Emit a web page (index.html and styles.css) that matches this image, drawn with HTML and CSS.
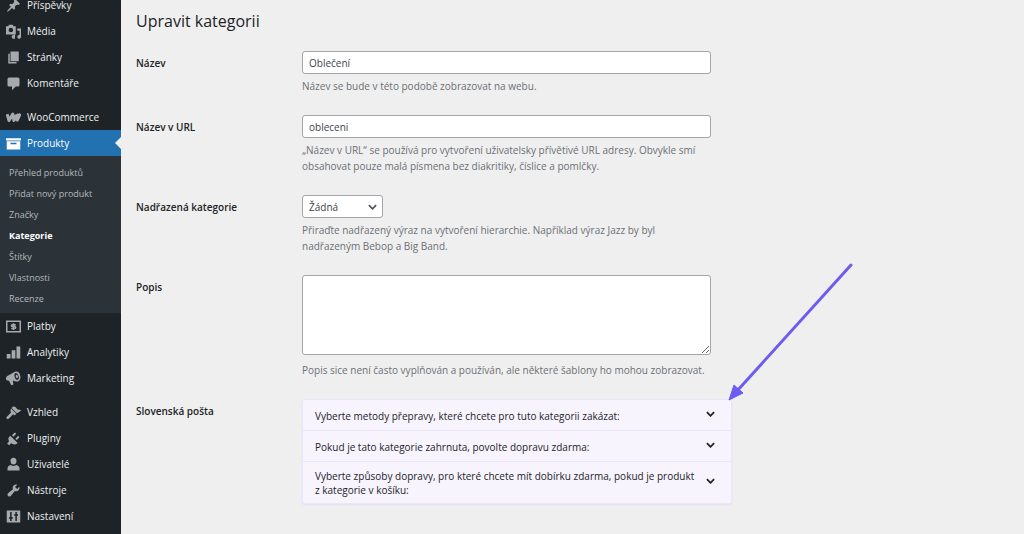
FILE: index.html
```html
<!DOCTYPE html>
<html lang="cs">
<head>
<meta charset="utf-8">
<meta name="viewport" content="width=device-width, initial-scale=1">
<title>Upravit kategorii</title>
<link rel="stylesheet" href="styles.css">
</head>
<body>
<div class="admin">
  <nav class="sidebar" aria-label="Hlavní menu">
    <ul class="menu">
      <li><a class="menu-link" href="#"><svg class="icon" viewBox="0 0 20 20"><path d="M10.440 3.020l1.820-1.820 6.360 6.350-1.830 1.820c-1.050-.68-2.480-.57-3.410.36l-.75.75c-.92.93-1.040 2.350-.35 3.410l-1.830 1.820-2.410-2.410-2.800 2.790c-.42.42-3.380 2.710-3.800 2.290s1.860-3.390 2.280-3.810l2.790-2.790L4.100 9.360l1.830-1.820c1.050.69 2.480.57 3.400-.36l.75-.75c.93-.92 1.050-2.350.36-3.410z"/></svg>Příspěvky</a></li>
      <li><a class="menu-link" href="#"><svg class="icon" viewBox="0 0 20 20"><path fill-rule="evenodd" d="M0 3h3l1-2h5l1 2h3v11H0zM6.500 5a3 3 0 1 0 0 6 3 3 0 0 0 0-6zM15 6h5v11a2.500 2.500 0 1 1-2-2.400V9h-3zM12 14v5.500h-2a2.500 2.500 0 1 1 0-5z"/></svg>Média</a></li>
      <li><a class="menu-link" href="#"><svg class="icon" viewBox="0 0 20 20"><path d="M6 15V2h11v13zM5 16h9v2H3V5h2z"/></svg>Stránky</a></li>
      <li><a class="menu-link" href="#"><svg class="icon" viewBox="0 0 20 20"><path d="M4 2h12q2 0 2 2v8q0 2-2 2h-3l-5 5v-5H4q-2 0-2-2V4q0-2 2-2z"/></svg>Komentáře</a></li>
    </ul>
    <ul class="menu">
      <li><a class="menu-link" href="#"><svg class="icon" viewBox="0 0 20 20"><path class="stroke" d="M1.500 5.500L4 14l5-8.500L10.500 14l6-8.500M12.500 6l2.500 7.500L19 5"/></svg>WooCommerce</a></li>
      <li>
        <a class="menu-link current" href="#"><svg class="icon" viewBox="0 0 20 20"><path fill-rule="evenodd" d="M0 3h20v3H0zM1 7h18v11H1zM6 9v2h8V9z"/></svg>Produkty</a>
        <ul class="submenu">
          <li><a href="#">Přehled produktů</a></li>
          <li><a href="#">Přidat nový produkt</a></li>
          <li><a href="#">Značky</a></li>
          <li><a class="selected" href="#" aria-current="page">Kategorie</a></li>
          <li><a href="#">Štítky</a></li>
          <li><a href="#">Vlastnosti</a></li>
          <li><a href="#">Recenze</a></li>
        </ul>
      </li>
      <li><a class="menu-link" href="#"><svg class="icon" viewBox="0 0 20 20"><path fill-rule="evenodd" d="M0 2h20v16H0zM2 4v12h16V4z"/><path class="line" d="M13 7.500H8.500q-1.300 0-1.300 1.200T8.500 10h3q1.400 0 1.400 1.300t-1.400 1.200H7M10 5.500v9"/></svg>Platby</a></li>
      <li><a class="menu-link" href="#"><svg class="icon" viewBox="0 0 20 20"><path d="M1 12h5v6H1zM7.500 7h5v11h-5zM14 2h5v16h-5z"/></svg>Analytiky</a></li>
      <li><a class="menu-link" href="#"><svg class="icon" viewBox="0 0 20 20"><path fill-rule="evenodd" d="M10 2c4-3 8-1 9 4s-1 8-4 8c-2 0-4-1-6-1l1 5-3 1-3-6c-3 0-4-1-4-3s1-3 3-4zM13 2.500c-3 0-2 9 2 9.500 4-.5 2-9-2-9.500zM14 5c2 0 3 4 1 4.500-2 0-3-4-1-4.500z"/></svg>Marketing</a></li>
    </ul>
    <ul class="menu">
      <li><a class="menu-link" href="#"><svg class="icon" viewBox="0 0 20 20"><path d="M14.480 11.060L7.410 3.990l1.500-1.500c.5-.56 2.300-.47 3.510.32 1.210.8 1.430 1.280 2 2.300.53.80 1.600 1.150 3 1.250l1.900.1.500 1.700c-1 .2-1.600.5-2.200 1.100zM6.700 4.700l7.070 7.070-1.500 1.500c-.5.4-1.500.3-2-.2-.6-.6-1.200-.4-1.700.1L4.300 17.700c-1 1-2.400 1.500-3.300.7-.8-.9-.3-2.300.7-3.300l4.500-4.300c.5-.5.7-1.100.1-1.700-.5-.5-.6-1.500-.2-2z"/></svg>Vzhled</a></li>
      <li><a class="menu-link" href="#"><svg class="icon" viewBox="0 0 20 20"><path d="M13.110 4.360L9.870 7.600 8 5.730l3.240-3.240c.35-.34 1.050-.2 1.560.32.520.51.660 1.210.31 1.550zM6 6.500l9.500 9.500-1 1c-2.500 1.500-5.500 1.200-7.600-.6L4 19l-2.500-2.500 2.700-2.700c-1.500-2.200-1.600-4.800.8-6.800zM14.300 12.100l-1.900-1.900L15.600 7c.4-.3 1.100-.2 1.600.3.500.6.700 1.200.3 1.600z"/></svg>Pluginy</a></li>
      <li><a class="menu-link" href="#"><svg class="icon" viewBox="0 0 20 20"><path d="M10 1a4 4 0 0 1 4 4.500C14 8 12.200 10 10 10S6 8 6 5.500A4 4 0 0 1 10 1zM6.500 10.500Q10 13.500 13.500 10.500 18 11.500 18 15v3H2v-3q0-3.500 4.500-4.500z"/></svg>Uživatelé</a></li>
      <li><a class="menu-link" href="#"><svg class="icon" viewBox="0 0 20 20"><path d="M16.680 9.770c-1.340 1.340-3.300 1.670-4.950.99l-5.410 6.520c-.99.99-2.590.99-3.580 0s-.99-2.590 0-3.570l6.520-5.420c-.68-1.650-.35-3.610.99-4.950 1.280-1.280 3.120-1.620 4.720-1.060l-2.890 2.890 2.820 2.820 2.860-2.870c.53 1.580.18 3.390-1.080 4.650z"/></svg>Nástroje</a></li>
      <li><a class="menu-link" href="#"><svg class="icon" viewBox="0 0 20 20"><path fill-rule="evenodd" d="M1 2h18v16H1zM5.500 4v7H4v2h1.500v3h2v-3H9v-2H7.500V4zM12.500 4v3H11v2h1.500v7h2V9H16V7h-1.500V4z"/></svg>Nastavení</a></li>
    </ul>
  </nav>

  <main class="content">
    <h1 class="title">Upravit kategorii</h1>
    <form class="form">
      <div class="row">
        <label class="label" for="name">Název</label>
        <div class="field">
          <input class="control" id="name" type="text" value="Oblečení">
          <p class="help">Název se bude v této podobě zobrazovat na webu.</p>
        </div>
      </div>
      <div class="row">
        <label class="label" for="slug">Název v URL</label>
        <div class="field">
          <input class="control" id="slug" type="text" value="obleceni">
          <p class="help">„Název v URL“ se používá pro vytvoření uživatelsky přívětivé URL adresy. Obvykle smí obsahovat pouze malá písmena bez diakritiky, číslice a pomlčky.</p>
        </div>
      </div>
      <div class="row">
        <label class="label" for="parent">Nadřazená kategorie</label>
        <div class="field">
          <div class="select-wrap">
            <select class="control select" id="parent"><option>Žádná</option></select>
            <svg class="select-arrow" viewBox="0 0 10 6"><path d="M1 1l4 4 4-4"/></svg>
          </div>
          <p class="help">Přiraďte nadřazený výraz na vytvoření hierarchie. Například výraz Jazz by byl nadřazeným Bebop a Big Band.</p>
        </div>
      </div>
      <div class="row">
        <label class="label" for="description">Popis</label>
        <div class="field">
          <textarea class="control textarea" id="description"></textarea>
          <p class="help">Popis sice není často vyplňován a používán, ale některé šablony ho mohou zobrazovat.</p>
        </div>
      </div>
      <div class="row">
        <span class="label" id="post-label">Slovenská pošta</span>
        <div class="accordion" role="group" aria-labelledby="post-label">
          <button class="panel" type="button"><span>Vyberte metody přepravy, které chcete pro tuto kategorii zakázat:</span><svg class="chevron" viewBox="0 0 10 6"><path d="M1 1l4 4 4-4"/></svg></button>
          <button class="panel" type="button"><span>Pokud je tato kategorie zahrnuta, povolte dopravu zdarma:</span><svg class="chevron" viewBox="0 0 10 6"><path d="M1 1l4 4 4-4"/></svg></button>
          <button class="panel" type="button"><span>Vyberte způsoby dopravy, pro které chcete mít dobírku zdarma, pokud je produkt z&nbsp;kategorie v košíku:</span><svg class="chevron" viewBox="0 0 10 6"><path d="M1 1l4 4 4-4"/></svg></button>
          <svg class="pointer" viewBox="0 0 130 142" aria-hidden="true"><path class="pointer-line" d="M126 5L12 131"/><path class="pointer-head" d="M4 140L9 125L18 133Z"/></svg>
        </div>
      </div>
    </form>
  </main>
</div>
</body>
</html>
```
FILE: styles.css
```css
* {
  box-sizing: border-box;
}

body {
  margin: 0;
  height: 100vh;
  overflow: hidden;
  background: #efefef;
  color: #3c434a;
  font: 10px/16px "Open Sans", "Noto Sans", sans-serif;
}

ul {
  list-style: none;
  margin: 0;
  padding: 0;
}

.admin {
  display: flex;
  min-height: 100vh;
}

/* Sidebar */
.sidebar {
  display: flex;
  flex-direction: column;
  flex: none;
  gap: 8px;
  width: 121px;
  margin-top: -8px;
  background: #1d2327;
}

.menu-link {
  display: flex;
  align-items: center;
  gap: 6px;
  height: 26px;
  padding-left: 6px;
  color: #f0f0f1;
  text-decoration: none;
}

.icon {
  flex: none;
  width: 15px;
  height: 15px;
  fill: #a7aaad;
}

.icon .stroke {
  fill: none;
  stroke: #a7aaad;
  stroke-width: 4;
  stroke-linejoin: round;
}

.icon .line {
  fill: none;
  stroke: #a7aaad;
  stroke-width: 2;
}

.current {
  position: relative;
  background: #2271b1;
  color: #fff;
}

.current .icon {
  fill: #fff;
}

.current::after {
  content: "";
  position: absolute;
  right: 0;
  top: 7px;
  border: 6px solid transparent;
  border-left: 0;
  border-right-color: #efefef;
}

.submenu {
  padding: 6px 0 4px;
  background: #2c3338;
}

.submenu a {
  display: block;
  padding-left: 9px;
  color: #b4b8bb;
  font-size: 9px;
  line-height: 21px;
  text-decoration: none;
}

.submenu .selected {
  color: #fff;
  font-weight: 700;
}

/* Form */
.content {
  flex: 1;
  min-width: 0;
  padding: 10px 15px;
}

.title {
  margin: 0 0 19px;
  color: #1d2327;
  font-size: 16px;
  font-weight: 400;
  line-height: 22px;
}

.form {
  display: grid;
  gap: 21px;
}

.row {
  display: grid;
  grid-template-columns: 166px minmax(0, 430px);
}

.label {
  padding-top: 4px;
  color: #1d2327;
  font-weight: 600;
}

.field {
  max-width: 409px;
}

.control {
  display: block;
  width: 100%;
  height: 23px;
  margin: 0;
  padding: 0 6px;
  border: 1px solid #a3a5a8;
  border-radius: 3px;
  background: #fff;
  color: #3c434a;
  font: inherit;
}

.textarea {
  height: 80px;
  margin-bottom: 7px;
}

.select-wrap {
  position: relative;
  width: 81px;
}

.select {
  appearance: none;
}

.select-arrow {
  position: absolute;
  right: 6px;
  top: 9px;
  width: 9px;
  height: 6px;
  fill: none;
  stroke: #50575e;
  stroke-width: 2;
  pointer-events: none;
}

.help {
  margin: 4px 0 0;
  color: #6c7076;
}

/* Accordion */
.accordion {
  position: relative;
  border: 1px solid #ebe5fb;
  border-radius: 3px;
  background: #f7f4fe;
  box-shadow: 0 1px 2px #e3e1ea;
}

.panel {
  display: flex;
  align-items: center;
  justify-content: space-between;
  gap: 8px;
  width: 100%;
  min-height: 31px;
  padding: 7px 16px 6px 12px;
  border: 0;
  border-bottom: 1px solid #ebe5fb;
  background: none;
  color: #1d2327;
  font: inherit;
  line-height: 14px;
  text-align: left;
}

.panel:last-of-type {
  border-bottom: 0;
}

.chevron {
  flex: none;
  width: 9px;
  height: 6px;
  margin-bottom: 4px;
  fill: none;
  stroke: #1d2327;
  stroke-width: 2;
}

.pointer {
  position: absolute;
  left: calc(100% - 6px);
  top: -140px;
  width: 130px;
  height: 142px;
  pointer-events: none;
}

.pointer-line {
  fill: none;
  stroke: #6c5cf0;
  stroke-width: 3;
  stroke-linecap: round;
}

.pointer-head {
  fill: #6c5cf0;
  stroke: #6c5cf0;
}
```
